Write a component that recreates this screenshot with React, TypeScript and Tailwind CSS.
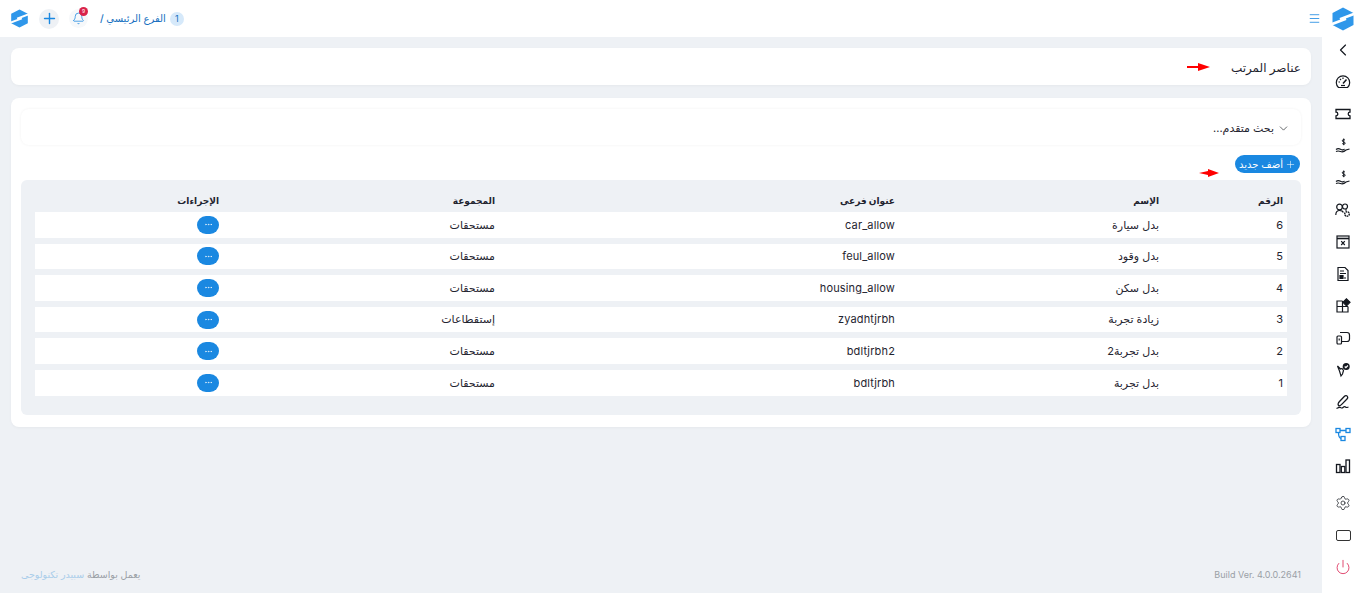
import { Bell, Plus, Menu, ChevronLeft, ChevronDown, Settings, Power, Ellipsis } from "lucide-react";
import type { ReactNode } from "react";

const rows = [
  { id: 6, name: "بدل سيارة", sub: "car_allow", group: "مستحقات" },
  { id: 5, name: "بدل وقود", sub: "feul_allow", group: "مستحقات" },
  { id: 4, name: "بدل سكن", sub: "housing_allow", group: "مستحقات" },
  { id: 3, name: "زيادة تجربة", sub: "zyadhtjrbh", group: "إستقطاعات" },
  { id: 2, name: "بدل تجربة2", sub: "bdltjrbh2", group: "مستحقات" },
  { id: 1, name: "بدل تجربة", sub: "bdltjrbh", group: "مستحقات" },
];

const Logo = ({ size }: { size: number }) => (
  <svg width={size} height={size} viewBox="0 0 24 24">
    <polygon points="12,0.5 22.500,6 22.500,18 12,23.500 1.500,18 1.500,6" fill="#2f97ea" />
    <path d="M24 6.500 L9 12.200 M0 17.500 L15 11.800" fill="none" stroke="#fff" strokeWidth="2.600" />
  </svg>
);

const Glyph = ({ children }: { children: ReactNode }) => (
  <svg width="16" height="16" viewBox="0 0 16 16" fill="none" stroke="#14181f" strokeWidth="1.200">
    {children}
  </svg>
);

const Coins = () => (
  <Glyph>
    <path d="M1 11.500c1.500-1.200 3-1.200 4.500-.3s3 .7 4 0l-2.500 1M1 13.500c1.500-.8 3-.6 4.500 0s3.500.4 5.500-1.500l3.500-1" />
    <path d="M10 2.200C9.500 1.300 7.300 1.300 7.300 2.800c0 1.500 2.900.9 2.900 2.400 0 1.300-2.400 1.300-3 .2M8.700.5v6.700" strokeWidth="1" />
  </Glyph>
);

const sideIcons: ReactNode[] = [
  <Glyph>
    <path d="M3.500 13.500A6.700 6.700 0 1 1 12.500 13.500z" />
    <path d="M8 9.500l3.500-4" strokeWidth="1.500" />
    <path d="M3.500 8h1.500M5 5l1 1M8 3.500V5" />
    <path d="M6 11.500h4" />
  </Glyph>,
  <Glyph>
    <path d="M1 3.500h14v2.700a1.800 1.800 0 0 0 0 3.600v2.700H1V9.800a1.800 1.800 0 0 0 0-3.600z" strokeWidth="1.300" />
  </Glyph>,
  <Coins />,
  <Coins />,
  <Glyph>
    <circle cx="4.500" cy="5" r="2.800" />
    <circle cx="10" cy="4.500" r="2.500" />
    <path d="M.8 13c0-3 1.500-4.500 3.700-4.500S8 9.500 8.300 10.500M10 8h2" />
    <circle cx="12" cy="12" r="2.300" strokeWidth="1.400" strokeDasharray="1.500 .6" />
  </Glyph>,
  <Glyph>
    <rect x="2" y="2" width="12" height="12" />
    <path d="M2 4.500h12" strokeWidth="1.600" />
    <path d="M6.200 7.200l3.600 3.800M9.800 7.200L6.200 11" />
  </Glyph>,
  <Glyph>
    <path d="M3 1.500h7l3 3v10H3z" />
    <path d="M5 5h4M5 7.500h6" />
    <path d="M5 9.500h3v3H5z" fill="#14181f" />
    <path d="M9 12h2" />
  </Glyph>,
  <Glyph>
    <path d="M7.500 3H2v11h11V8.500M2 8.500h11M7.500 3v11" />
    <path d="M11.500 .8l3.500 3.500-3.500 3.500-3.500-3.500z" fill="#14181f" />
  </Glyph>,
  <Glyph>
    <path d="M5 2.500h7a2.500 2.500 0 0 1 2.500 2.500v4a2.500 2.500 0 0 1-2.500 2.500H7" />
    <rect x="2" y="6" width="4.500" height="8" rx="1" />
    <path d="M4.200 8.500v2" />
  </Glyph>,
  <Glyph>
    <path d="M2.500 4l2 5 1.500 5 1.500-2 1-3.500L7 6.500 5.500 7z" />
    <circle cx="11.200" cy="4.500" r="3.500" fill="#14181f" stroke="none" />
    <path d="M9.700 4.500l1.200 1.200 2-2.200" stroke="#fff" />
  </Glyph>,
  <Glyph>
    <path d="M3.500 11.500c-1-1 0-3 1-4l5-5.300c1-1 2.500-.6 3 .3.500.8.200 1.800-.5 2.500l-5.300 5.400c-1 1-2.500 2-3.200 1.100z" strokeWidth="1.300" />
    <path d="M1.500 14.500c2-1 3-1.500 4-1s1.500 1 2.500 0 1.500-1.500 2.500-.5 1.500.5 3 0" />
  </Glyph>,
  <svg key="flow" width="16" height="16" viewBox="0 0 16 16" fill="none" stroke="#1a88e1" strokeWidth="1.300">
    <rect x="1" y="2.500" width="4" height="4" />
    <rect x="11" y="2.500" width="4" height="4" />
    <rect x="6" y="10.500" width="4" height="4" />
    <path d="M5 4.500h6M3.500 6.500c0 3 1 5.500 2.500 6" />
  </svg>,
  <Glyph>
    <rect x="1.500" y="6.500" width="3.500" height="8" strokeWidth="1.300" />
    <rect x="6.300" y="8.500" width="3.500" height="6" strokeWidth="1.300" />
    <rect x="11" y="2" width="3.500" height="12.500" strokeWidth="1.300" />
  </Glyph>,
];

export default function App() {
  return (
    <div dir="rtl" className="h-screen flex overflow-hidden bg-[#eef1f5] text-[#1f2430] font-['Inter','DejaVu_Sans',sans-serif]">
      {/* Sidebar */}
      <aside className="w-[42px] shrink-0 bg-white flex flex-col items-center">
        <div className="h-[37px] flex items-center justify-center">
          <Logo size={24} />
        </div>
        <div className="mt-[5px] flex flex-col items-center">
          <div className="h-4 flex items-center">
            <ChevronLeft size={20} strokeWidth={1.4} color="#14181f" />
          </div>
          <div className="mt-4 flex flex-col gap-4">
            {sideIcons.map((icon, i) => (
              <div key={i} className="w-4 h-4 flex items-center justify-center">
                {icon}
              </div>
            ))}
          </div>
          <div className="mt-[21px] flex flex-col gap-4">
            <Settings size={16} strokeWidth={1.1} color="#14181f" />
            <div className="w-4 h-4 flex items-center justify-center">
              <div className="w-[15px] h-[11px] border-[1.500px] border-[#333] rounded-[2px]" />
            </div>
            <Power size={16} strokeWidth={1.3} color="#dc2f5c" />
          </div>
        </div>
      </aside>

      <div className="flex-1 min-w-0 flex flex-col">
        {/* Top bar */}
        <header className="h-[37px] shrink-0 bg-white flex items-center justify-between pr-[1px] pl-[10px]">
          <Menu size={13} strokeWidth={1.5} color="#1a88e1" />
          <div className="flex items-center gap-[10px]">
            <div className="flex items-center gap-1 ml-[2px] text-[10px] font-medium text-[#1670c0]">
              <span className="w-[14px] h-[14px] rounded-full bg-[#d6e9fa] flex items-center justify-center text-[9px] font-normal">1</span>
              <span>الفرع الرئيسي /</span>
            </div>
            <div className="relative w-[19px] h-[19px] rounded-full bg-[#f6f8fa] flex items-center justify-center">
              <Bell size={13} strokeWidth={1.4} color="#1a88e1" />
              <span className="absolute -top-[2px] right-0 w-[9px] h-[9px] rounded-full bg-[#d9234a] text-white text-[5px] flex items-center justify-center">9</span>
            </div>
            <div className="w-5 h-5 rounded-full bg-[#eef1f5] flex items-center justify-center">
              <Plus size={17} strokeWidth={2} color="#1a88e1" />
            </div>
            <Logo size={19} />
          </div>
        </header>

        {/* Content */}
        <main className="flex-1 min-h-0 flex flex-col pt-[11px] px-[11px]">
          <div className="relative h-[37px] bg-white rounded-lg shadow-[0_1px_3px_rgba(0,0,0,0.04)] flex items-center pr-[10px] pt-[2px] text-[12px] font-medium">
            عناصر المرتب
            <svg className="absolute left-[1176px] top-[15px]" width="23" height="8" viewBox="0 0 23 8">
              <path d="M0 3h11V0l12 4-12 4V5H0z" fill="#f00" />
            </svg>
          </div>

          <section className="relative mt-[13px] h-[329px] bg-white rounded-lg shadow-[0_1px_3px_rgba(0,0,0,0.04)] px-[10px] pt-[11px]">
            <div className="h-[36px] rounded-lg bg-white shadow-[0_0_3px_rgba(0,0,0,0.06)] flex items-center gap-[3px] pr-[11px] pt-[2px] text-[11px]">
              <ChevronDown size={13} strokeWidth={1.2} color="#14181f" />
              <span>بحث متقدم...</span>
            </div>
            <button className="mt-[10px] mr-px h-[18px] w-[65px] rounded-full bg-[#1a88e1] text-white text-[10px] flex items-center justify-center gap-[2px]">
              <Plus size={11} strokeWidth={1.2} />
              أضف جديد
            </button>
            <svg className="absolute left-[1188px] top-[71px]" width="20" height="8" viewBox="0 0 20 8">
              <path d="M0 4l9-2V0l11 4-11 4V6z" fill="#f00" />
            </svg>

            <div className="mt-[7px] h-[235px] bg-[#eef1f5] rounded-md px-[14px] pt-[9px]">
              <table className="w-full table-fixed border-separate border-spacing-x-0 border-spacing-y-[6px] text-[11px]">
                <thead>
                  <tr className="h-[11px] text-[9px] leading-[11px]">
                    <th className="w-[124px] text-right font-bold pr-1">الرقم</th>
                    <th className="w-[264px] text-right font-bold pr-1">الإسم</th>
                    <th className="w-[400px] text-right font-bold pr-1">عنوان فرعى</th>
                    <th className="w-[276px] text-right font-bold pr-1">المجموعة</th>
                    <th className="text-right font-bold pr-1">الإجراءات</th>
                  </tr>
                </thead>
                <tbody>
                  {rows.map((r) => (
                    <tr key={r.id} className="h-[25.600px] bg-white">
                      <td className="pr-1 text-right">{r.id}</td>
                      <td className="pr-1 text-right">{r.name}</td>
                      <td className="pr-1 text-right tracking-[0.15px]">{r.sub}</td>
                      <td className="pr-1 text-right">{r.group}</td>
                      <td className="pr-1">
                        <span className="w-[22px] h-[18px] rounded-full bg-[#1a88e1] text-white flex items-center justify-center">
                          <Ellipsis size={9} strokeWidth={1.5} />
                        </span>
                      </td>
                    </tr>
                  ))}
                </tbody>
              </table>
            </div>
          </section>

          <footer className="mt-auto h-[25px] flex items-start justify-between px-[10px] text-[9px] text-[#9aa0a6]">
            <span dir="ltr">Build Ver. 4.0.0.2641</span>
            <span className="text-[9.500px]">
              يعمل بواسطة <span className="text-[#a9cdea]">سبيدر تكنولوجى</span>
            </span>
          </footer>
        </main>
      </div>
    </div>
  );
}
